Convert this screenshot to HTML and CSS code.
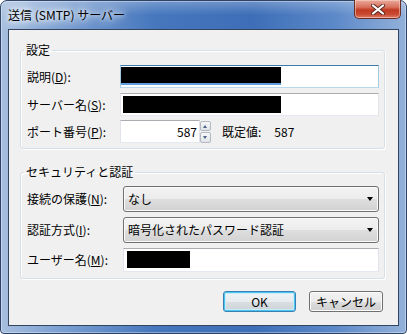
FILE: index.html
```html
<!DOCTYPE html>
<html lang="ja">
<head>
  <meta charset="UTF-8">
  <title>送信 (SMTP) サーバー</title>
  <link rel="stylesheet" href="styles.css">
</head>
<body>
  <div class="window">
    <div class="titlebar">
      <span class="title">送信 (SMTP) サーバー</span>
      <span class="close">
        <svg width="14" height="11" viewBox="0 0 14 11">
          <path d="M2 1.5 L12 9.5 M12 1.5 L2 9.5" stroke="#5a2a22" stroke-width="4" stroke-linecap="round"/>
          <path d="M2 1.5 L12 9.5 M12 1.5 L2 9.5" stroke="#fff" stroke-width="2.2" stroke-linecap="round"/>
        </svg>
      </span>
    </div>

    <div class="client">
      <fieldset class="group g1">
        <legend>設定</legend>
        <div class="row">
          <label>説明(<u>D</u>):</label>
          <div class="textbox focus"><span class="redact sel"></span></div>
        </div>
        <div class="row">
          <label>サーバー名(<u>S</u>):</label>
          <div class="textbox"><span class="redact r2"></span></div>
        </div>
        <div class="row port">
          <label>ポート番号(<u>P</u>):</label>
          <div class="textbox num">587</div>
          <div class="spin">
            <span class="up"></span>
            <span class="down"></span>
          </div>
          <span class="deflabel">既定値:</span>
          <span class="defval">587</span>
        </div>
      </fieldset>

      <fieldset class="group g2">
        <legend>セキュリティと認証</legend>
        <div class="row">
          <label>接続の保護(<u>N</u>):</label>
          <div class="combo"><span class="ctext">なし</span><span class="arrow"></span></div>
        </div>
        <div class="row">
          <label>認証方式(<u>I</u>):</label>
          <div class="combo"><span class="ctext">暗号化されたパスワード認証</span><span class="arrow"></span></div>
        </div>
        <div class="row">
          <label>ユーザー名(<u>M</u>):</label>
          <div class="textbox user"><span class="redact r3"></span></div>
        </div>
      </fieldset>

      <div class="buttons">
        <button class="btn default">OK</button>
        <button class="btn">キャンセル</button>
      </div>
    </div>
  </div>
</body>
</html>
```

FILE: styles.css
```css
body { margin: 0; font-family: "Noto Sans CJK JP", "Noto Sans", sans-serif; font-size: 12px; color: #000; }

.window {
  width: 407px; height: 334px; box-sizing: border-box;
  border: 1px solid #2e4366; border-radius: 7px 7px 4px 4px;
  display: flex; flex-direction: column;
  background:
    linear-gradient(180deg, rgba(255,255,255,0.25) 0px, rgba(255,255,255,0) 14px),
    linear-gradient(90deg, #a7bfdf 0%, #7da1d3 14%, #4677bd 38%, #3d6eb7 62%, #5b88c8 82%, #93b1da 100%);
  box-shadow: inset 0 0 0 1px rgba(255,255,255,0.35);
}

.titlebar { height: 28px; display: flex; align-items: center; padding-left: 7px; }
.title {
  flex: 1; line-height: 16px; margin-top: -1px;
  text-shadow: 0 0 4px #fff, 0 0 8px #fff, 0 0 12px #eef4fb, 0 0 16px #e3ecf7;
}
.close {
  align-self: flex-start; margin-right: 5px; margin-top: -1px;
  width: 47px; height: 19px; box-sizing: border-box;
  border: 1px solid #6a3028; border-top: none; border-radius: 0 0 5px 5px;
  background: linear-gradient(180deg, #e9aa9d 0%, #d8705d 40%, #c13a23 55%, #c94a32 80%, #e0806a 100%);
  box-shadow: inset 0 0 0 1px rgba(255,220,210,0.5);
  display: flex; align-items: center; justify-content: center;
}

.client {
  flex: 1; margin: 0 7px 7px; background: #f0f0f0;
  border: 1px solid #33465f;
  padding: 12px 13px 0 11px;
}

.group {
  margin: 0; min-width: 0;
  border: 1px solid #d5dfe5; border-radius: 3px;
  box-shadow: inset 1px 1px 0 #fff, 1px 1px 0 #fff;
  padding: 7px 5px 5px 6px;
}
.group legend { padding: 0 2px; margin-left: -3px; line-height: 16px; }
.g2 { margin-top: 15px; padding-top: 6px; padding-bottom: 6px; }

.row { display: flex; align-items: center; }
.row + .row { margin-top: 5px; }
.row.port { margin-top: 4px; }
.row label { width: 93px; flex: none; line-height: 16px; }
.g2 .row label { width: 96px; }

.textbox {
  flex: 1; height: 23px; box-sizing: border-box; background: #fff;
  border: 1px solid #e2e3ea; border-top-color: #abadb3; border-bottom-color: #e3e9ef;
  display: flex; align-items: flex-start;
}
.textbox.focus { border-color: #a4c9e3; border-top-color: #3d7bad; border-bottom-color: #b7d9ed; }
.textbox.num {
  flex: none; width: 80px; justify-content: flex-end; align-items: center;
  padding-right: 2px; line-height: 16px;
}
.textbox.user { height: 24px; }

.redact { display: block; background: #000; height: 17px; }
.redact.sel { width: 160px; margin-top: 1px; height: 18px; border-bottom: 2px solid #5e9ede; box-sizing: border-box; }
.redact.r2 { width: 158px; margin: 2px 0 0 2px; }
.redact.r3 { width: 63px; margin: 2px 0 0 3px; }

.spin {
  width: 11px; height: 22px; box-sizing: border-box; margin-left: 0;
  display: flex; flex-direction: column; gap: 1px;
}
.spin span {
  flex: 1; border: 1px solid #b4b9c2; border-radius: 2px;
  background: linear-gradient(#f7f7f7, #dfe3e8);
  position: relative;
}
.spin span::after {
  content: ""; position: absolute; left: 2px; top: 3px;
  border-left: 2.5px solid transparent; border-right: 2.5px solid transparent;
}
.spin .up::after { border-bottom: 3px solid #4d6185; }
.spin .down::after { border-top: 3px solid #4d6185; }

.deflabel { margin-left: 11px; line-height: 16px; }
.defval { margin-left: 13px; line-height: 16px; }

.combo {
  flex: 1; height: 26px; box-sizing: border-box;
  border: 1px solid #707070; border-radius: 3px;
  background: linear-gradient(180deg, #f3f3f3 0%, #ececec 50%, #dedede 52%, #d2d2d2 100%);
  box-shadow: inset 0 0 0 1px #fafafa;
  display: flex; align-items: center; padding: 0 5px 0 4px;
}
.ctext { flex: 1; line-height: 16px; }
.arrow {
  width: 0; height: 0;
  border-left: 3.5px solid transparent; border-right: 3.5px solid transparent;
  border-top: 4px solid #000;
}

.buttons { display: flex; justify-content: flex-end; gap: 13px; margin-top: 12px; padding-right: 2px; }
.btn {
  height: 21px; width: 74px; padding: 0; font: inherit; line-height: 16px; color: #000;
  border: 1px solid #707070; border-radius: 3px;
  background: linear-gradient(180deg, #f2f2f2 0%, #ebebeb 50%, #dddddd 52%, #cfcfcf 100%);
  box-shadow: inset 0 0 0 1px #fbfbfb;
}
.btn.default {
  width: 73px; border-color: #3c7fb1;
  box-shadow: inset 0 0 0 1px #48c6f2, inset 0 0 0 2px #c8ecfa;
  background: linear-gradient(180deg, #f0f3f5 0%, #e8ecef 50%, #d9dee2 52%, #cdd3d8 100%);
}
```
